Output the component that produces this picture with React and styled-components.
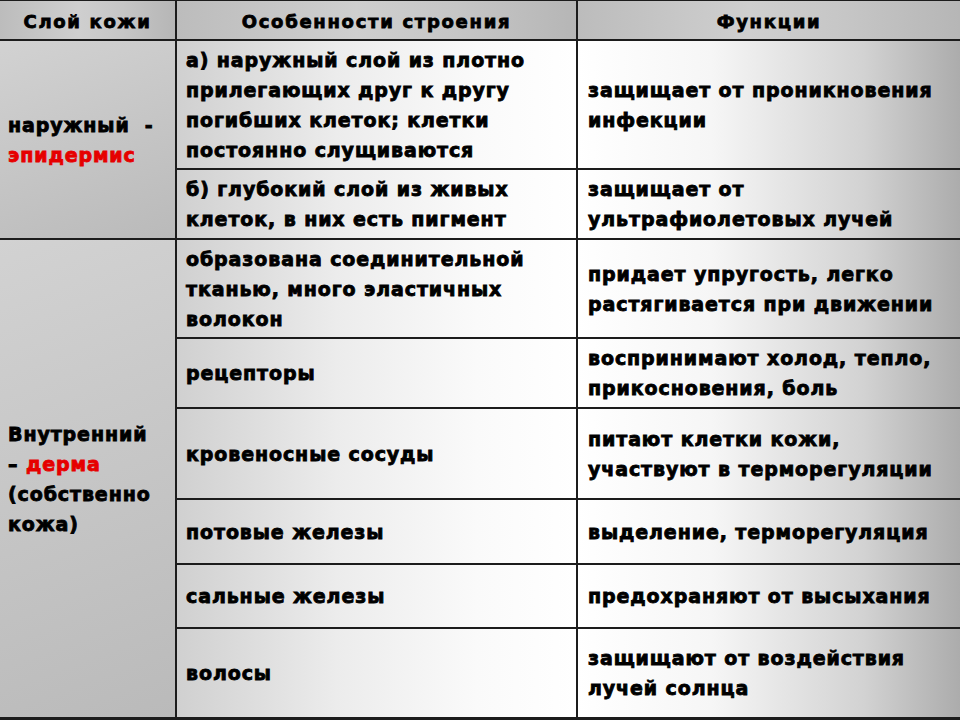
import React from "react";
import styled, { createGlobalStyle } from "styled-components";

const GlobalStyle = createGlobalStyle`
  html, body {
    margin: 0;
    padding: 0;
    background: #ffffff;
  }
  body {
    font-family: "DejaVu Sans", "Liberation Sans", sans-serif;
  }
`;

const rows = [
  {
    side: "outer",
    structure: ["а) наружный слой из плотно", "прилегающих друг к другу", "погибших клеток; клетки", "постоянно слущиваются"],
    func: ["защищает от проникновения", "инфекции"],
  },
  {
    structure: ["б) глубокий слой из живых", "клеток, в них есть пигмент"],
    func: ["защищает от", "ультрафиолетовых лучей"],
  },
  {
    side: "inner",
    structure: ["образована соединительной", "тканью, много эластичных", "волокон"],
    func: ["придает упругость, легко", "растягивается при движении"],
  },
  { structure: ["рецепторы"], func: ["воспринимают холод, тепло,", "прикосновения, боль"] },
  { structure: ["кровеносные сосуды"], func: ["питают клетки кожи,", "участвуют в терморегуляции"] },
  { structure: ["потовые железы"], func: ["выделение, терморегуляция"] },
  { structure: ["сальные железы"], func: ["предохраняют от высыхания"] },
  { structure: ["волосы"], func: ["защищают от воздействия", "лучей солнца"] },
];

const Table = styled.div`
  display: grid;
  grid-template-columns: 175px 399px 1fr;
  grid-template-rows: 38px 127px 68px 97px 68px 89px 63px 62px 88px;
  gap: 2px;
  width: 960px;
  height: 720px;
  box-sizing: border-box;
  padding: 1px 0 2px 0;
  background: #1c1c1c;
`;

const HeadCell = styled.div`
  display: flex;
  align-items: center;
  justify-content: center;
  padding-top: 2px;
  background: linear-gradient(90deg, #bcbcbc 0%, #cfcfcf 45%, #c6c6c6 70%, #b6b6b6 100%);
  font-size: 18px;
  font-weight: bold;
  color: #000;
  letter-spacing: 1.7px;
  -webkit-text-stroke: 0.8px #000;
`;

const SideCell = styled.div`
  grid-row: ${(p) => p.$rows};
  display: flex;
  align-items: center;
  padding: 0 4px 0 8px;
  background: linear-gradient(160deg, #d2d2d2 0%, #c6c6c6 50%, #bababa 100%);
`;

const Cell = styled.div`
  display: flex;
  align-items: center;
  padding: 0 4px 0 ${(p) => (p.$func ? 10 : 9)}px;
  background: ${(p) =>
    p.$func
      ? "linear-gradient(90deg, #ffffff 0%, #f6f6f6 35%, #d2d2d2 75%, #acacac 100%)"
      : "linear-gradient(90deg, #d0d0d0 0%, #ececec 40%, #fafafa 75%, #ffffff 100%)"};
`;

const Text = styled.div`
  font-size: 19px;
  font-weight: bold;
  line-height: 30px;
  color: #000;
  white-space: nowrap;
  letter-spacing: 0.9px;
  -webkit-text-stroke: 0.85px currentColor;
`;

const Red = styled.span`
  color: #e60000;
`;

function Lines({ lines }) {
  return (
    <Text>
      {lines.map((l, i) => (
        <div key={i}>{l}</div>
      ))}
    </Text>
  );
}

export default function App() {
  return (
    <>
      <GlobalStyle />
      <Table>
        <HeadCell>Слой кожи</HeadCell>
        <HeadCell>Особенности строения</HeadCell>
        <HeadCell>Функции</HeadCell>
        {rows.map((r, i) => (
          <React.Fragment key={i}>
            {r.side === "outer" && (
              <SideCell $rows="2 / 4">
                <Text>
                  <div>наружный&nbsp;&nbsp;-</div>
                  <Red>эпидермис</Red>
                </Text>
              </SideCell>
            )}
            {r.side === "inner" && (
              <SideCell $rows="4 / 10">
                <Text>
                  <div>Внутренний</div>
                  <div>
                    – <Red>дерма</Red>
                  </div>
                  <div>(собственно</div>
                  <div>кожа)</div>
                </Text>
              </SideCell>
            )}
            <Cell>
              <Lines lines={r.structure} />
            </Cell>
            <Cell $func>
              <Lines lines={r.func} />
            </Cell>
          </React.Fragment>
        ))}
      </Table>
    </>
  );
}
